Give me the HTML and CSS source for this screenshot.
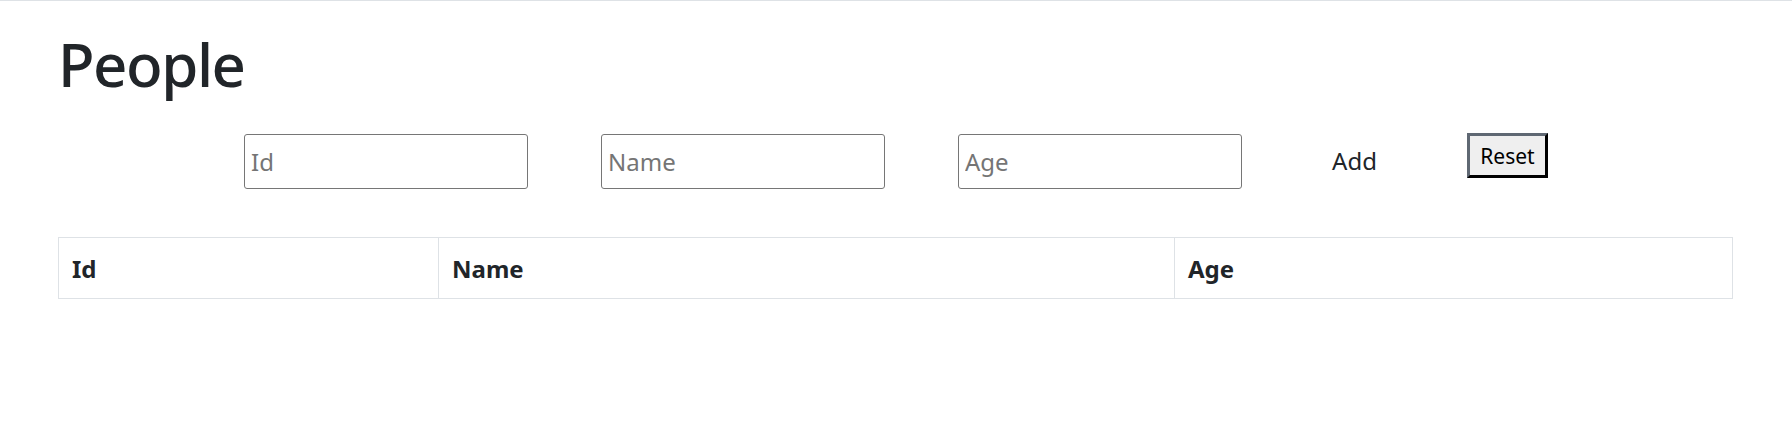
FILE: index.html
```html
<!DOCTYPE html>
<html lang="en">
<head>
<meta charset="utf-8">
<title>People</title>
<link rel="stylesheet" href="styles.css">
</head>
<body>
<div class="page">
  <h1 class="title">People</h1>
  <form class="entry-form">
    <input class="field" type="text" placeholder="Id">
    <input class="field" type="text" placeholder="Name">
    <input class="field" type="text" placeholder="Age">
    <button class="btn-add" type="button">Add</button>
    <button class="btn-reset" type="reset">Reset</button>
  </form>
  <table class="people-table">
    <thead>
      <tr>
        <th class="col-id">Id</th>
        <th class="col-name">Name</th>
        <th class="col-age">Age</th>
      </tr>
    </thead>
  </table>
</div>
</body>
</html>
```

FILE: styles.css
```css
html, body {
  margin: 0;
  padding: 0;
  background: #ffffff;
}

body {
  border-top: 1px solid #dee2e6;
  font-family: "Noto Sans", "Open Sans", sans-serif;
  color: #212529;
  font-size: 24px;
  line-height: 36px;
}

.page {
  padding: 0 60px 0 58px;
}

.title {
  margin: 27px 0 0 0;
  font-size: 60px;
  line-height: 72px;
  font-weight: 500;
  letter-spacing: -1.5px;
  color: #212529;
}

.entry-form {
  display: flex;
  justify-content: center;
  align-items: flex-start;
  gap: 73px;
  margin: 34px -60px 0 -58px;
}

.field {
  box-sizing: border-box;
  width: 284px;
  height: 55px;
  margin: 0;
  padding: 0 6px;
  border: 1px solid #767676;
  border-radius: 3px;
  font-family: "Noto Sans", "Open Sans", sans-serif;
  font-size: 24px;
  color: #212529;
  background: #ffffff;
}

.field::placeholder {
  color: #757575;
}

.btn-add {
  box-sizing: border-box;
  width: 79px;
  height: 54px;
  margin: 0;
  padding: 9px 0;
  border: none;
  background: transparent;
  font-family: "Noto Sans", "Open Sans", sans-serif;
  font-size: 24px;
  line-height: 36px;
  color: #212529;
  text-align: center;
}

.btn-reset {
  box-sizing: border-box;
  width: 81px;
  height: 45px;
  margin: -1px 0 0 0;
  padding: 7px 0 5px;
  border: 3px solid;
  border-color: #5f6873 #000000 #000000 #5f6873;
  background: #efefef;
  font-family: "Noto Sans", "Open Sans", sans-serif;
  font-size: 21px;
  line-height: 27px;
  color: #000000;
  text-align: center;
}

.people-table {
  width: 1674px;
  margin-top: 48px;
  border-collapse: collapse;
  table-layout: fixed;
}

.people-table th {
  box-sizing: border-box;
  padding: 13px 12px 11px 13px;
  border: 1px solid #dee2e6;
  text-align: left;
  font-weight: 700;
  font-size: 24px;
  line-height: 36px;
  color: #212529;
}

.col-id { width: 380px; }
.col-name { width: 736px; }
.col-age { width: 558px; }
```
